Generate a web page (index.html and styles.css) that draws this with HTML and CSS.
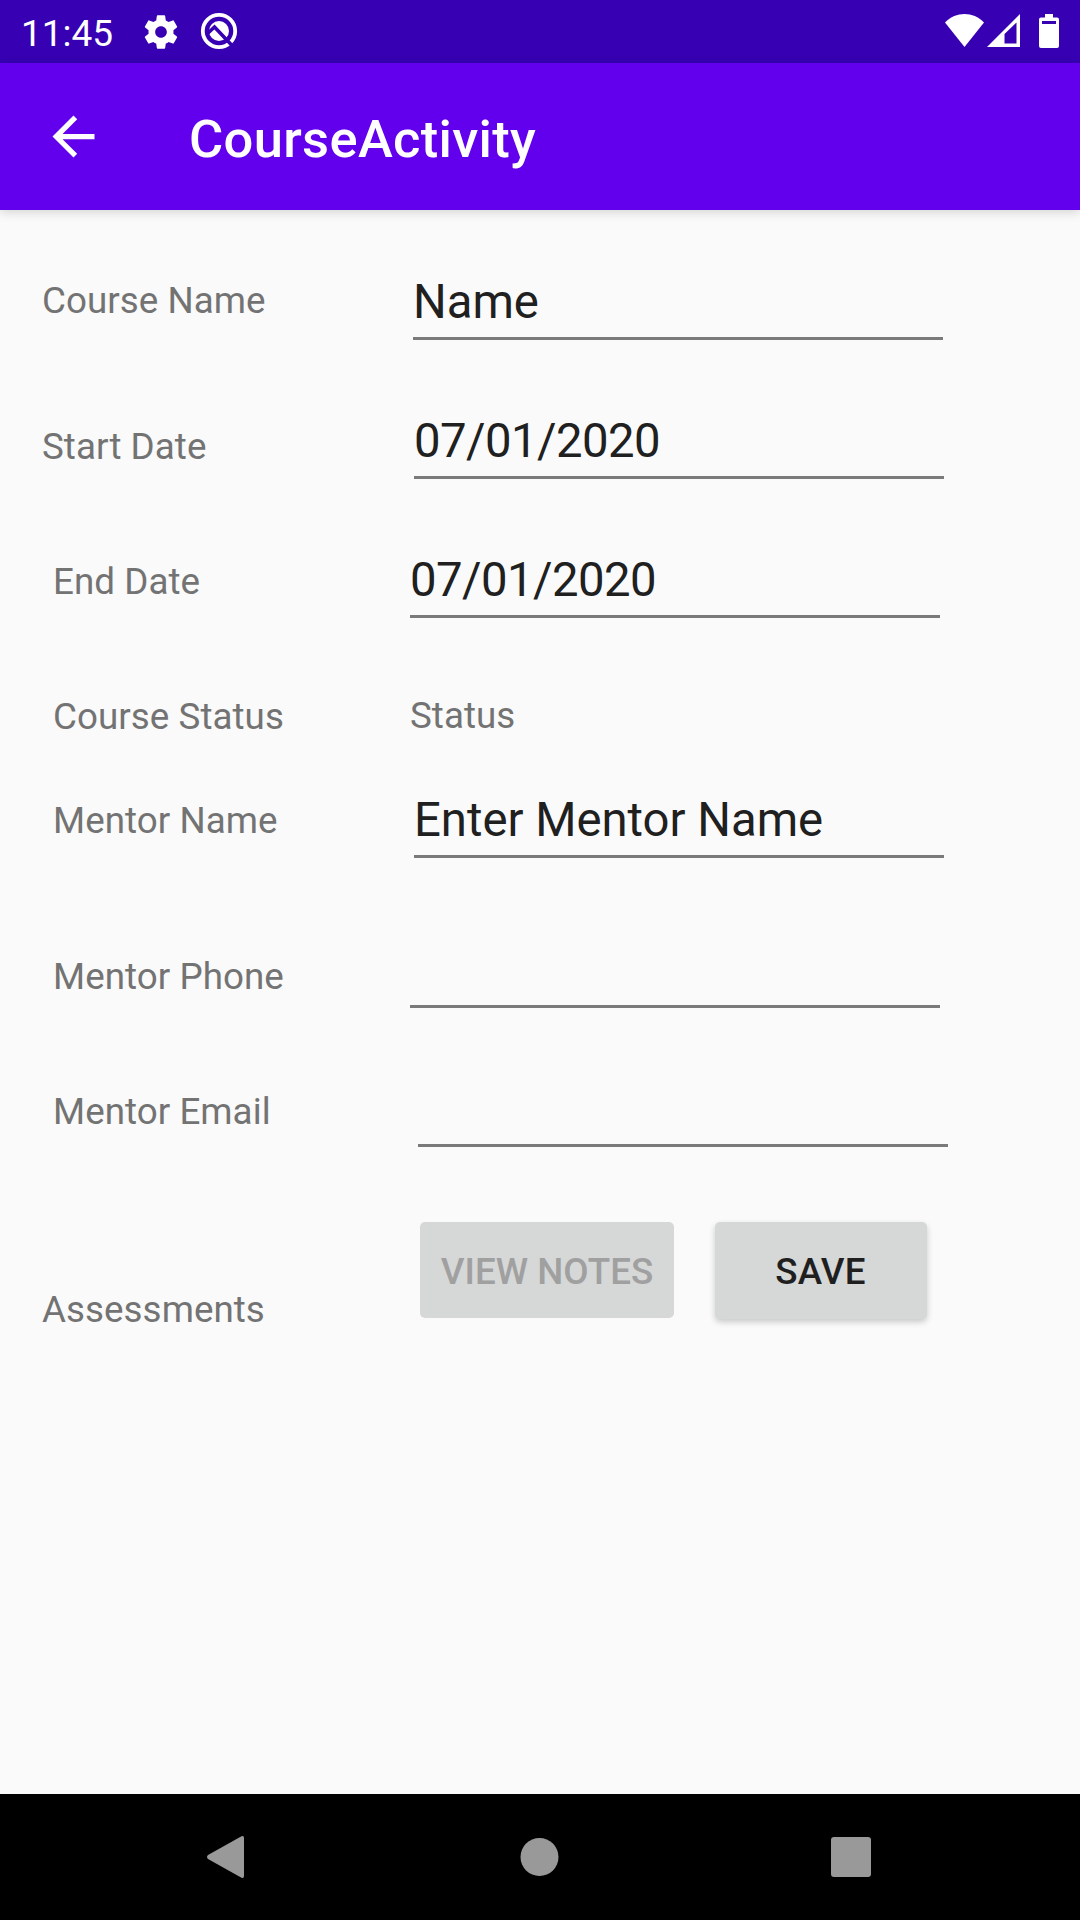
FILE: index.html
```html
<!DOCTYPE html>
<html lang="en">
<head>
<meta charset="utf-8">
<title>CourseActivity</title>
<link rel="stylesheet" href="styles.css">
</head>
<body>
<div class="screen">
  <header class="status-bar">
    <span class="clock">11:45</span>
    <svg class="gear" viewBox="0 0 24 24"><path d="M19.43 12.98c.04-.32.07-.64.07-.98s-.03-.66-.07-.98l2.11-1.65c.19-.15.24-.42.12-.64l-2-3.46c-.12-.22-.39-.3-.61-.22l-2.49 1c-.52-.4-1.08-.73-1.69-.98l-.38-2.65C14.46 2.18 14.25 2 14 2h-4c-.25 0-.46.18-.49.42l-.38 2.65c-.61.25-1.17.59-1.69.98l-2.49-1c-.23-.09-.49 0-.61.22l-2 3.46c-.13.22-.07.49.12.64l2.11 1.65c-.04.32-.07.65-.07.98s.03.66.07.98l-2.11 1.65c-.19.15-.24.42-.12.64l2 3.46c.12.22.39.3.61.22l2.49-1c.52.4 1.08.73 1.69.98l.38 2.65c.03.24.24.42.49.42h4c.25 0 .46-.18.49-.42l.38-2.65c.61-.25 1.17-.59 1.69-.98l2.49 1c.23.09.49 0 .61-.22l2-3.46c.12-.22.07-.49-.12-.64l-2.11-1.65zM12 15.5c-1.93 0-3.5-1.57-3.5-3.5s1.57-3.5 3.5-3.5 3.5 1.57 3.5 3.5-1.57 3.5-3.5 3.5z"/></svg>
    <svg class="debug" viewBox="0 0 38 38">
      <circle class="ring" cx="19" cy="19" r="16.200"/>
      <circle cx="19" cy="19" r="10"/>
      <path class="slash" d="M7.500 21.500L14.500 15L32 33.500"/>
    </svg>
    <span class="spacer"></span>
    <svg class="wifi" viewBox="0 0 39 33"><path d="M0 8.5C11-2.8 28-2.8 39 8.5L19.500 33z"/></svg>
    <svg class="signal" viewBox="0 0 33 33"><path fill-rule="evenodd" d="M33 0V33H0zM29.500 8.500L17.500 20V29.500H29.500z"/></svg>
    <svg class="battery" viewBox="0 0 20 34"><path fill-rule="evenodd" d="M6 0h8v3.500h4q2 0 2 2V32q0 2-2 2H2q-2 0-2-2V5.500q0-2 2-2h4zM3 7v3h14V7z"/></svg>
  </header>
  <div class="app-bar">
    <svg class="back" viewBox="0 0 24 24"><path d="M20 11H7.830l5.590-5.590L12 4l-8 8 8 8 1.410-1.410L7.830 13H20v-2z"/></svg>
    <h1 class="title">CourseActivity</h1>
  </div>
  <main class="form">
    <div class="row course-name"><span class="label">Course Name</span><span class="field">Name</span></div>
    <div class="row start-date"><span class="label">Start Date</span><span class="field date">07/01/2020</span></div>
    <div class="row end-date"><span class="label">End Date</span><span class="field date">07/01/2020</span></div>
    <div class="row course-status"><span class="label">Course Status</span><span class="status">Status</span></div>
    <div class="row mentor-name"><span class="label">Mentor Name</span><span class="field">Enter Mentor Name</span></div>
    <div class="row mentor-phone"><span class="label">Mentor Phone</span><span class="field"></span></div>
    <div class="row mentor-email"><span class="label">Mentor Email</span><span class="field"></span></div>
    <div class="row actions"><span class="label">Assessments</span><button class="button notes" disabled>VIEW NOTES</button><button class="button save">SAVE</button></div>
  </main>
  <nav class="nav-bar">
    <svg viewBox="0 0 42 42"><path d="M36.500 0.300Q39 -.5 39 2V40Q39 42.500 36.500 41.700L3 23Q1 21 3 19z"/></svg>
    <svg viewBox="0 0 42 42"><circle cx="21.500" cy="21" r="19"/></svg>
    <svg viewBox="0 0 42 42"><rect x="1" y="1" width="40" height="40" rx="3"/></svg>
  </nav>
</div>
</body>
</html>
```
FILE: styles.css
```css
* { box-sizing: border-box; }
body { margin: 0; font-family: Roboto, sans-serif; background: #fafafa; }
svg { display: block; flex: none; overflow: visible; }

.screen { width: 1080px; height: 1920px; display: flex; flex-direction: column; overflow: hidden; }

.status-bar { height: 63px; flex: none; display: flex; align-items: flex-start; padding: 0 21px 0 21px; background: #3700b3; color: #fff; fill: #fff; }
.clock { width: 120px; margin-top: 12px; font-size: 37px; line-height: 43px; }
.gear { width: 40px; height: 40px; margin-top: 11.500px; }
.debug { width: 38px; height: 38px; margin: 12px 0 0 19px; }
.debug .ring { fill: none; stroke: #fff; stroke-width: 3.800; }
.debug .slash { fill: none; stroke: #3700b3; stroke-width: 3.500; }
.spacer { flex: 1; }
.wifi { width: 39px; height: 33px; margin-top: 14px; }
.signal { width: 33px; height: 33px; margin: 14px 0 0 3px; }
.battery { width: 20px; height: 34px; margin: 14px 0 0 19px; }

.app-bar { height: 147px; flex: none; display: flex; align-items: center; padding-left: 42px; background: #6200ee; color: #fff; fill: #fff; box-shadow: 0 2px 10px rgba(0, 0, 0, .16); }
.back { width: 63px; height: 63px; }
.title { margin: 5px 0 0 84px; font-size: 52.500px; line-height: 62px; font-weight: 500; letter-spacing: .32px; }

.form { flex: 1; }
.row { display: flex; align-items: flex-start; height: 139px; }
.label, .status { font-size: 36.750px; line-height: 43px; color: #737373; letter-spacing: .05px; white-space: nowrap; }
.label { width: 371px; flex: none; margin-left: 42px; }
.field { width: 530px; height: 65px; align-self: flex-end; border-bottom: 3px solid #7a7a7a; font-size: 47.250px; line-height: 55px; color: #202020; white-space: nowrap; }
.date { letter-spacing: -.55px; }

.course-name { height: 130px; }
.course-name .label { padding-top: 69px; }
.start-date .label { width: 372px; padding-top: 85px; }
.end-date .label { width: 357px; margin-left: 53px; padding-top: 81px; }
.course-status { height: 110px; }
.course-status .label { width: 357px; margin-left: 53px; padding-top: 77px; }
.course-status .status { padding-top: 76px; }
.mentor-name { height: 130px; }
.mentor-name .label { width: 361px; margin-left: 53px; padding-top: 71px; }
.mentor-phone { height: 150px; }
.mentor-phone .label { width: 357px; margin-left: 53px; padding-top: 97px; }
.mentor-email .label { width: 365px; margin-left: 53px; padding-top: 82px; }
.actions { height: 200px; padding-top: 75px; }
.actions .label { width: 378px; padding-top: 66px; }

.button { height: 96px; padding: 2px 0 0; border: 0; border-radius: 5px; background: #d6d7d7; font: 500 36.750px/43px Roboto, sans-serif; color: #1f1f1f; white-space: nowrap; }
.notes { width: 254px; color: #a0a0a0; }
.save { width: 212px; height: 97px; margin-left: 41px; padding: 1px 1px 0 0; letter-spacing: .25px; box-shadow: 0 3px 6px rgba(0, 0, 0, .2); }

.nav-bar { height: 126px; flex: none; display: flex; align-items: center; justify-content: space-between; padding: 0 208px 0 205px; background: #000; fill: #999; }
.nav-bar svg { width: 42px; height: 42px; }
```
